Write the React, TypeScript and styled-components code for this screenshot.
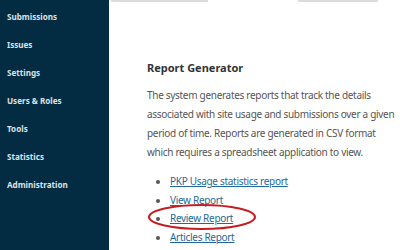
import React from "react";
import styled, { createGlobalStyle } from "styled-components";

const Global = createGlobalStyle`
  html, body { margin: 0; padding: 0; width: 400px; height: 250px; overflow: hidden; background: #fff; }
  body { font-family: "Noto Sans", sans-serif; }
`;

const Page = styled.div`
  display: flex;
  width: 400px;
  height: 250px;
  overflow: hidden;
`;

const Sidebar = styled.nav`
  width: 109px;
  flex-shrink: 0;
  background: #032b41;
  display: flex;
  flex-direction: column;
  padding-top: 10px;
  box-sizing: border-box;
`;

const NavItem = styled.a`
  display: block;
  height: 28px;
  line-height: 14px;
  padding-left: 7px;
  font-size: 8.1px;
  font-weight: 700;
  color: #dbe3e8;
  text-decoration: none;
`;

const Main = styled.main`
  flex: 1;
  display: flex;
  flex-direction: column;
  position: relative;
`;

const TopBar = styled.div`
  display: flex;
  height: 2px;
  padding-left: 2px;
`;

const Tab = styled.div<{ $w: number; $ml: number }>`
  width: ${(p) => p.$w}px;
  margin-left: ${(p) => p.$ml}px;
  height: 2px;
  background: #dcdcdc;
`;

const Content = styled.section`
  padding: 57px 0 0 38px;
`;

const Heading = styled.h2`
  margin: 0 0 9px;
  font-size: 11px;
  line-height: 18px;
  font-weight: 700;
  color: #333;
`;

const Para = styled.p`
  margin: 0 0 10px;
  font-size: 10px;
  letter-spacing: -0.3px;
  line-height: 19px;
  color: #555;
  width: 254px;
`;

const List = styled.ul`
  margin: 0;
  padding-left: 23px;
  font-size: 10px;
  letter-spacing: -0.3px;
  line-height: 18.7px;
  color: #555;
`;

const Item = styled.li`
  position: relative;
`;

const Link = styled.a`
  color: #1f6a98;
  text-decoration: underline;
`;

const Circle = styled.svg`
  position: absolute;
  left: -22px;
  top: -5px;
  overflow: visible;
  pointer-events: none;
`;

export default function App() {
  const nav = ["Submissions", "Issues", "Settings", "Users & Roles", "Tools", "Statistics", "Administration"];
  return (
    <>
      <Global />
      <Page>
        <Sidebar>
          {nav.map((n) => (
            <NavItem key={n}>{n}</NavItem>
          ))}
        </Sidebar>
        <Main>
          <TopBar>
            <Tab $w={97} $ml={0} />
            <Tab $w={80} $ml={90} />
          </TopBar>
          <Content>
            <Heading>Report Generator</Heading>
            <Para>
              The system generates reports that track the details associated with site usage and submissions over a given
              period of time. Reports are generated in CSV format which requires a spreadsheet application to view.
            </Para>
            <List>
              <Item>
                <Link>PKP Usage statistics report</Link>
              </Item>
              <Item>
                <Link>View Report</Link>
              </Item>
              <Item>
                <Link>Review Report</Link>
                <Circle width="108" height="26" viewBox="0 0 108 26">
                  <ellipse cx="54" cy="13" rx="53" ry="12" fill="none" stroke="#c41e24" strokeWidth="2" />
                </Circle>
              </Item>
              <Item>
                <Link>Articles Report</Link>
              </Item>
            </List>
          </Content>
        </Main>
      </Page>
    </>
  );
}
